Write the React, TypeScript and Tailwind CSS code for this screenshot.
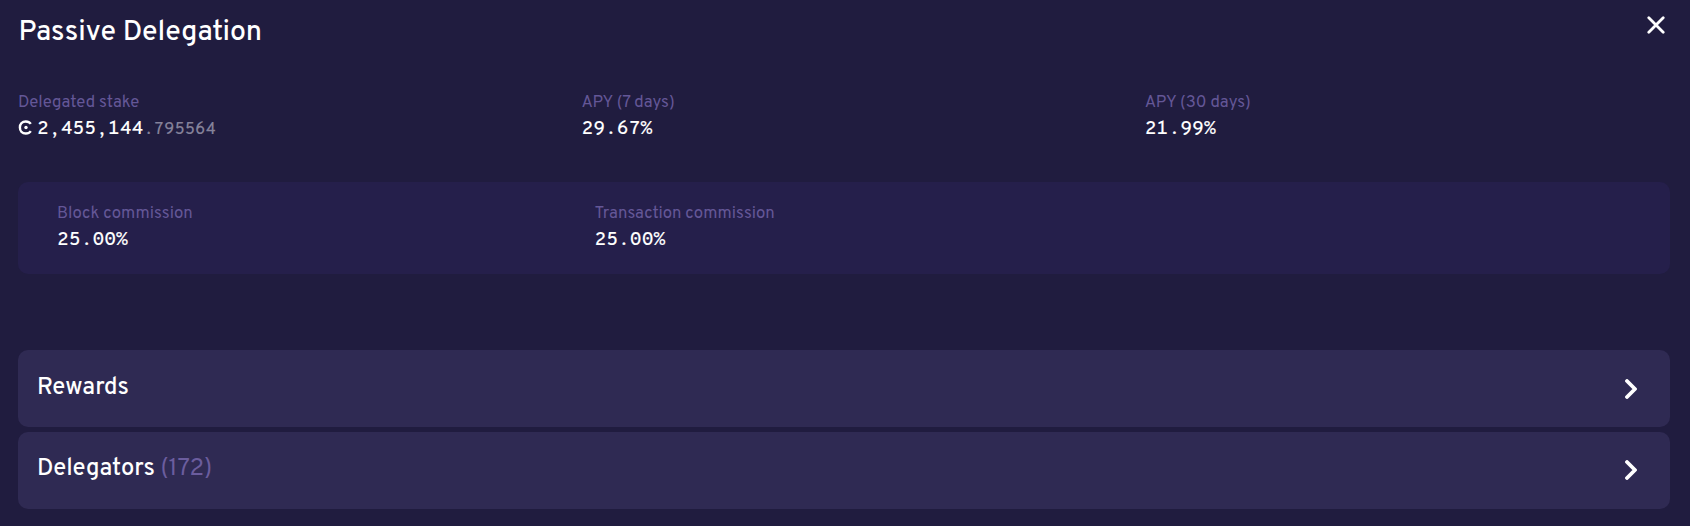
import React from "react";

function Stat({ label, children }: { label: string; children: React.ReactNode }) {
  return (
    <div className="flex flex-col items-start pt-px">
      <span className="h-6 whitespace-nowrap text-[16.8px] leading-6 text-[#645797]">{label}</span>
      <span className="mt-0.5 flex h-6 items-baseline font-['Overpass_Mono','Liberation_Mono',monospace] text-[19.2px] font-medium leading-6 text-white [-webkit-text-stroke:0.12px_currentColor]">
        {children}
      </span>
    </div>
  );
}

function AccordionRow({ children }: { children: React.ReactNode }) {
  return (
    <button className="flex h-[76.8px] w-full items-center justify-between rounded-[10px] bg-[#2f2a53] pl-[19px] pr-[33px] text-left">
      <span className="-mt-[2px] text-[23.8px] font-medium leading-8 text-white">{children}</span>
      <svg width="12" height="20" viewBox="0 0 12 20" fill="none" stroke="white" strokeWidth="3.8" strokeLinecap="round" strokeLinejoin="round">
        <path d="M2 2l8 8-8 8" />
      </svg>
    </button>
  );
}

export default function App() {
  return (
    <main className="h-[526px] w-full overflow-hidden bg-[#201c3f] pl-[18px] pr-5 font-['Overpass','Roboto',sans-serif]">
      <header className="flex h-[90px] items-start justify-between pr-[5.5px]">
        <h1 className="mt-[13px] pl-[0.5px] text-[28.4px] font-medium leading-10 text-white">Passive Delegation</h1>
        <button aria-label="Close" className="mt-[15.5px]">
          <svg width="18" height="18" viewBox="0 0 18 18" fill="none" stroke="white" strokeWidth="2.8" strokeLinecap="round">
            <path d="M1.8 1.8l14.4 14.4M16.2 1.8L1.8 16.2" />
          </svg>
        </button>
      </header>
      <section className="flex h-[92px]">
        <div className="w-[563.4px]">
          <Stat label="Delegated stake">
            <svg className="mr-[4px] h-[15px] w-[15px] -translate-y-0.5 self-center" viewBox="0 0 15 15" fill="none" stroke="white" strokeWidth="2.4">
              <path d="M12.8 3.9C11.6 2.2 9.8 1.5 7.8 1.5C4.2 1.5 1.9 4 1.9 7.5C1.9 11 4.2 13.5 7.8 13.5C9.8 13.5 11.6 12.8 12.8 11.1" />
              <circle cx="8" cy="7.5" r="1.7" fill="white" stroke="none" />
            </svg>
            <span>2,455,144</span>
            <span className="text-[16.8px] text-[#85829a]">.795564</span>
          </Stat>
        </div>
        <div className="w-[563.4px]">
          <Stat label="APY (7 days)">29.67%</Stat>
        </div>
        <Stat label="APY (30 days)">21.99%</Stat>
      </section>
      <section className="flex h-[92px] rounded-[10px] bg-[#251f4b] pl-[39px] pt-[19px]">
        <div className="w-[537.4px]">
          <Stat label="Block commission">25.00%</Stat>
        </div>
        <Stat label="Transaction commission">25.00%</Stat>
      </section>
      <section className="mt-[76.2px] flex flex-col gap-[4.8px]">
        <AccordionRow>Rewards</AccordionRow>
        <AccordionRow>
          Delegators <span className="font-normal text-[#6b5d9e]">(172)</span>
        </AccordionRow>
      </section>
    </main>
  );
}
